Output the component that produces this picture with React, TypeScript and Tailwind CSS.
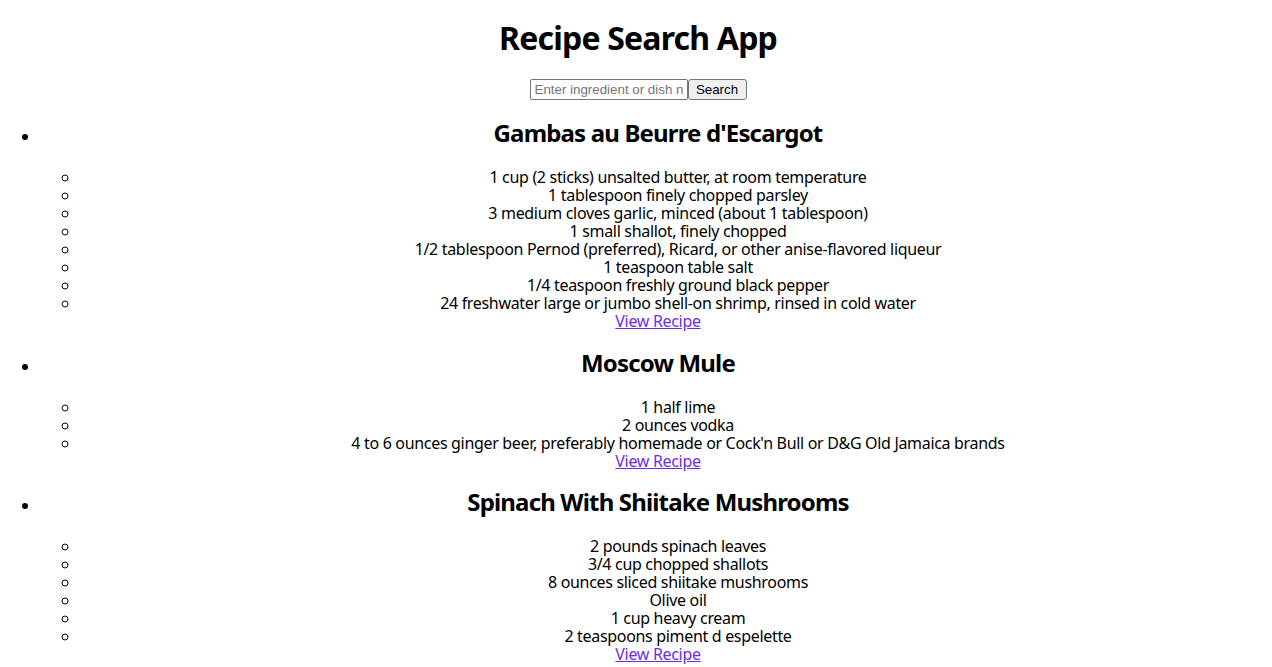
import React from 'react';

interface Recipe {
  title: string;
  ingredients: string[];
}

const recipes: Recipe[] = [
  {
    title: "Gambas au Beurre d'Escargot",
    ingredients: [
      '1 cup (2 sticks) unsalted butter, at room temperature',
      '1 tablespoon finely chopped parsley',
      '3 medium cloves garlic, minced (about 1 tablespoon)',
      '1 small shallot, finely chopped',
      '1/2 tablespoon Pernod (preferred), Ricard, or other anise-flavored liqueur',
      '1 teaspoon table salt',
      '1/4 teaspoon freshly ground black pepper',
      '24 freshwater large or jumbo shell-on shrimp, rinsed in cold water',
    ],
  },
  {
    title: 'Moscow Mule',
    ingredients: [
      '1 half lime',
      '2 ounces vodka',
      "4 to 6 ounces ginger beer, preferably homemade or Cock'n Bull or D&G Old Jamaica brands",
    ],
  },
  {
    title: 'Spinach With Shiitake Mushrooms',
    ingredients: [
      '2 pounds spinach leaves',
      '3/4 cup chopped shallots',
      '8 ounces sliced shiitake mushrooms',
      'Olive oil',
      '1 cup heavy cream',
      '2 teaspoons piment d espelette',
    ],
  },
];

const App: React.FC = () => {
  return (
    <div className="min-h-screen bg-white text-center text-black font-['Noto_Sans',sans-serif] tracking-[-0.02em] text-[16px] leading-[18px]">
      <h1 className="pl-1 text-[32px] font-bold leading-[37px] tracking-[-0.025em] mt-[19.44px] mb-[22.44px]">Recipe Search App</h1>

      {/* Search form */}
      <div className="flex justify-center h-[21px] pl-1">
        <input
          type="text"
          placeholder="Enter ingredient or dish name"
          className="w-[158px] h-[21px] px-[4px] border border-[#767676] rounded-[2px] font-['Liberation_Sans',Arial,sans-serif] text-[13.33px] tracking-normal text-black placeholder:text-[#757575] outline-none"
        />
        <button className="w-[59px] h-[21px] pt-px border border-[#767676] rounded-[3px] bg-[#efefef] font-['Liberation_Sans',Arial,sans-serif] text-[13.33px] leading-[17px] tracking-normal text-black">
          Search
        </button>
      </div>

      {/* Results */}
      <ul className="list-disc pl-10 my-4">
        {recipes.map((r) => (
          <li key={r.title}>
            <h2 className="pl-1 text-[24px] font-bold leading-[28px] tracking-[-0.035em] mt-[18.92px] mb-[20.92px]">{r.title}</h2>
            <ul className="list-[circle] pl-10">
              {r.ingredients.map((ing) => (
                <li key={ing} className="pl-1">
                  {ing}
                </li>
              ))}
            </ul>
            <div className="pl-1">
              <a href="#" className="text-[#6b2ee8] underline">
                View Recipe
              </a>
            </div>
          </li>
        ))}
      </ul>
    </div>
  );
};

export default App;
